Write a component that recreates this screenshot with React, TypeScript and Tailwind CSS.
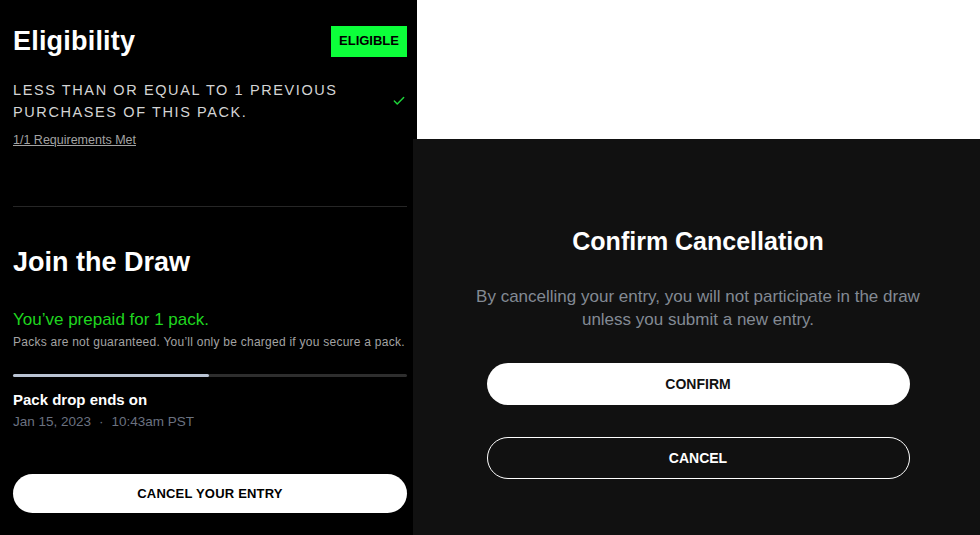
import React from 'react';

const font = { fontFamily: '"Liberation Sans", Arial, sans-serif' };

const LeftPanel = () => (
  <div className="w-[413px] shrink-0 bg-black h-full pl-[13px] pr-[6px] flex flex-col">
    <div className="flex items-center justify-between pt-[25px]">
      <h2 className="text-[27px] leading-[32px] font-bold text-white tracking-[0.2px]">Eligibility</h2>
      <span className="h-[31px] w-[76px] flex items-center justify-center bg-[#0cff3a] text-black text-[13px] font-bold">
        ELIGIBLE
      </span>
    </div>

    <div className="flex items-center justify-between mt-[22px]">
      <p className="text-[14.5px] leading-[22px] tracking-[1.6px] text-[#d4d4d4] uppercase">
        Less than or equal to 1 previous
        <br />
        purchases of this pack.
      </p>
      <svg width="14" height="14" viewBox="0 0 24 24" fill="none" stroke="#1ed53a" strokeWidth="2.5" strokeLinecap="round" strokeLinejoin="round" className="mr-[1px]">
        <path d="M20 6 9 17l-5-5" />
      </svg>
    </div>
    <a className="mt-[9px] text-[12.5px] leading-[16px] text-[#a3a3a3] underline self-start">1/1 Requirements Met</a>

    <div className="mt-[58px] h-px bg-[#262626]" />

    <h2 className="mt-[39px] text-[27px] leading-[32px] font-bold text-white">Join the Draw</h2>

    <p className="mt-[32px] text-[17px] leading-[20px] text-[#1fd61f]">You’ve prepaid for 1 pack.</p>
    <p className="mt-[5px] text-[12px] leading-[14px] text-[#a3a3a3] tracking-[0.25px]">
      Packs are not guaranteed. You’ll only be charged if you secure a pack.
    </p>

    <div className="mt-[25px] h-[3px] bg-[#2e2e2e] rounded-full flex">
      <div className="h-full w-[196px] bg-[#b9c3d3] rounded-full" />
    </div>

    <p className="mt-[14px] text-[15px] leading-[18px] font-bold text-white">Pack drop ends on</p>
    <p className="mt-[5px] text-[13.5px] leading-[16px] text-[#6b7280] flex items-center gap-[8px]">
      <span>Jan 15, 2023</span>
      <span>·</span>
      <span>10:43am PST</span>
    </p>

    <button className="mt-[44px] h-[39px] w-full rounded-full bg-white text-black text-[13px] font-bold tracking-[0.2px]">
      CANCEL YOUR ENTRY
    </button>
  </div>
);

const RightPanel = () => (
  <div className="flex-1 flex flex-col h-full">
    <div className="h-[139px] bg-white ml-[4px]" />
    <div className="flex-1 bg-[#111111] pl-[3px] flex flex-col items-center">
      <h3 className="mt-[88px] text-[25px] leading-[28px] font-bold text-white">Confirm Cancellation</h3>
      <p className="mt-[30px] text-[17px] leading-[23px] text-[#838a94] text-center">
        By cancelling your entry, you will not participate in the draw
        <br />
        unless you submit a new entry.
      </p>
      <button className="mt-[32px] w-[423px] h-[42px] rounded-full bg-white text-[#111] text-[14px] font-bold">
        CONFIRM
      </button>
      <button className="mt-[32px] w-[423px] h-[42px] rounded-full border border-white text-white text-[14px] font-bold">
        CANCEL
      </button>
    </div>
  </div>
);

export default function App() {
  return (
    <div className="w-[980px] h-[535px] flex overflow-hidden bg-black" style={font}>
      <LeftPanel />
      <RightPanel />
    </div>
  );
}
